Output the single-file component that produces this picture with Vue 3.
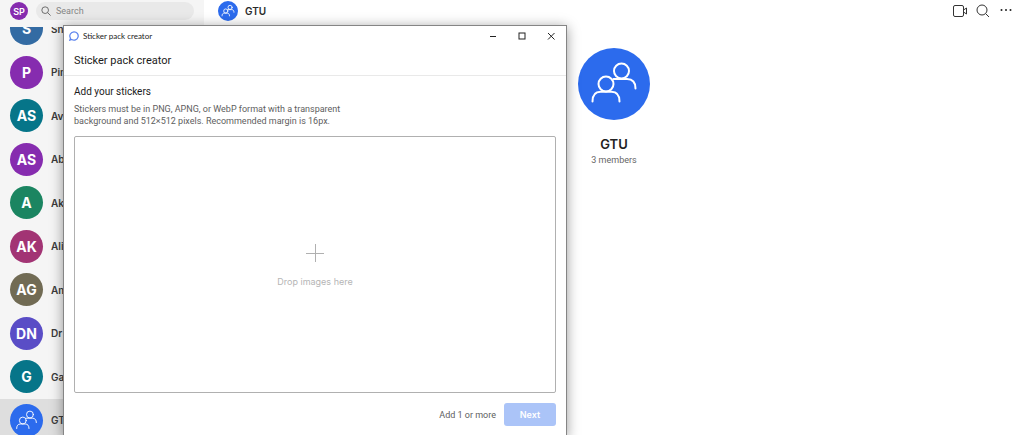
<script setup>
const chats = [
  { initials: 'S', name: 'Sn', tone: 'steel' },
  { initials: 'P', name: 'Pin', tone: 'violet' },
  { initials: 'AS', name: 'Av', tone: 'teal' },
  { initials: 'AS', name: 'Ab', tone: 'violet' },
  { initials: 'A', name: 'Ak', tone: 'green' },
  { initials: 'AK', name: 'Alis', tone: 'plum' },
  { initials: 'AG', name: 'Am', tone: 'taupe' },
  { initials: 'DN', name: 'Dr', tone: 'indigo' },
  { initials: 'G', name: 'Ga', tone: 'teal' },
  { initials: '', name: 'GTU', tone: 'blue', group: true, active: true },
]
</script>

<template>
  <div class="app">
    <svg class="defs" aria-hidden="true">
      <symbol id="group" viewBox="0 0 72 72">
        <g fill="none" stroke="#fff" stroke-linecap="round">
          <circle cx="43.500" cy="23" r="7.500" />
          <circle cx="28" cy="36" r="7.500" />
          <path d="M14.500 53.500C14.500 47 17.500 43.700 22.500 43.700H33.500C38.500 43.700 41.500 47 41.500 53.500" />
          <path d="M35.500 31H49C54.500 31 57.500 34.500 57.500 40.500" />
        </g>
      </symbol>
    </svg>

    <aside class="sidebar">
      <header class="side-head">
        <button class="me" type="button">SP</button>
        <label class="search">
          <svg viewBox="0 0 12 12" width="10" height="10" aria-hidden="true">
            <circle cx="5" cy="5" r="4" />
            <path d="M8 8l3.500 3.500" />
          </svg>
          <input type="text" placeholder="Search" aria-label="Search" />
        </label>
      </header>
      <nav class="chats" aria-label="Chats">
        <ul>
          <li v-for="(chat, i) in chats" :key="i" :class="{ active: chat.active }">
            <span class="avatar" :class="chat.tone">
              <svg v-if="chat.group" class="group" aria-hidden="true"><use href="#group" /></svg>
              <template v-else>{{ chat.initials }}</template>
            </span>
            <span class="name">{{ chat.name }}</span>
          </li>
        </ul>
      </nav>
    </aside>

    <main class="conversation">
      <header class="conv-head">
        <span class="badge blue"><svg class="group" aria-hidden="true"><use href="#group" /></svg></span>
        <span class="title">GTU</span>
        <div class="actions">
          <button type="button" aria-label="Video call">
            <svg viewBox="0 0 16 16" width="16" height="16">
              <rect x="1.500" y="2.500" width="10" height="11" rx="1.500" />
              <path d="M11.500 7L14.500 5V11L11.500 9" />
            </svg>
          </button>
          <button type="button" aria-label="Search in chat">
            <svg viewBox="0 0 16 16" width="16" height="16">
              <circle cx="7" cy="7" r="5" />
              <path d="M10.700 10.700L14 14" />
            </svg>
          </button>
          <button type="button" aria-label="More">
            <svg class="dots" viewBox="0 0 16 16" width="16" height="16">
              <circle cx="3.500" cy="7" r="1" />
              <circle cx="8" cy="7" r="1" />
              <circle cx="12.500" cy="7" r="1" />
            </svg>
          </button>
        </div>
      </header>
      <section class="hero">
        <span class="portrait blue"><svg class="group" aria-hidden="true"><use href="#group" /></svg></span>
        <h1>GTU</h1>
        <p>3 members</p>
      </section>
    </main>

    <div class="window" role="dialog" aria-labelledby="creator-title">
      <div class="titlebar">
        <svg class="logo" viewBox="0 0 12 12" width="10" height="10" aria-hidden="true">
          <path d="M6 1A5 5 0 1 1 3.300 10.200L1 11L1.800 8.700A5 5 0 0 1 6 1Z" />
        </svg>
        <span>Sticker pack creator</span>
        <div class="controls">
          <button type="button" aria-label="Minimize">
            <svg viewBox="0 0 8 8" width="8" height="8"><path d="M1 4.500H7" /></svg>
          </button>
          <button type="button" aria-label="Maximize">
            <svg viewBox="0 0 8 8" width="8" height="8"><rect x="1" y="1" width="6" height="6" /></svg>
          </button>
          <button type="button" aria-label="Close">
            <svg viewBox="0 0 8 8" width="8" height="8"><path d="M1 1L7.500 7.500M7.500 1L1 7.500" /></svg>
          </button>
        </div>
      </div>
      <h2 id="creator-title">Sticker pack creator</h2>
      <div class="body">
        <h3>Add your stickers</h3>
        <p class="hint">Stickers must be in PNG, APNG, or WebP format with a transparent background and 512×512 pixels. Recommended margin is 16px.</p>
        <button class="drop" type="button">
          <svg viewBox="0 0 20 20" width="20" height="20" aria-hidden="true"><path d="M10.500 1V19M1 10.500H19" /></svg>
          <span>Drop images here</span>
        </button>
      </div>
      <footer>
        <span>Add 1 or more</span>
        <button class="next" type="button" disabled>Next</button>
      </footer>
    </div>
  </div>
</template>

<style>
body {
  overflow: hidden;
}
</style>

<style scoped>
.app {
  position: relative;
  display: flex;
  height: 100vh;
  overflow: hidden;
  background: #fff;
  color: #2b2b2b;
  font-family: Inter, "Liberation Sans", sans-serif;
}
.app * {
  box-sizing: border-box;
}
.defs {
  position: absolute;
  width: 0;
  height: 0;
}
button {
  padding: 0;
  border: 0;
  background: none;
  color: inherit;
  font: inherit;
}
svg {
  flex: none;
}
h1, h2, h3, p, ul {
  margin: 0;
  padding: 0;
}

.sidebar {
  display: flex;
  flex: none;
  flex-direction: column;
  width: 204px;
  background: #f5f5f5;
}
.side-head {
  display: flex;
  flex: none;
  align-items: center;
  gap: 8px;
  height: 27px;
  padding: 0 10px 5px;
}
.me {
  flex: none;
  width: 18px;
  height: 18px;
  border-radius: 50%;
  background: #862caf;
  color: #fff;
  font-size: 9px;
  font-weight: 600;
}
.search {
  display: flex;
  flex: 1;
  align-items: center;
  gap: 5px;
  height: 18px;
  padding: 0 5px;
  border-radius: 9px;
  background: #e9e9e9;
}
.search svg {
  fill: none;
  stroke: #555;
}
.search input {
  width: 100%;
  min-width: 0;
  padding: 0;
  border: 0;
  outline: 0;
  background: none;
  font: 9px Roboto, "Liberation Sans", sans-serif;
}
.search input::placeholder {
  color: #858585;
  opacity: 1;
}
.chats {
  flex: 1;
  min-height: 0;
  overflow: hidden;
}
.chats ul {
  display: grid;
  grid-auto-rows: 1fr;
  height: 435px;
  margin-top: -20px;
  list-style: none;
}
.chats li {
  display: flex;
  align-items: center;
  gap: 8px;
  padding-left: 10px;
}
.chats li.active {
  background: #dedede;
}
.avatar, .badge, .portrait {
  display: flex;
  flex: none;
  align-items: center;
  justify-content: center;
  border-radius: 50%;
  color: #fff;
}
.avatar {
  width: 33px;
  height: 33px;
  font-size: 14px;
  font-weight: 700;
}
.name {
  color: #3b3b3b;
  font-size: 10px;
  font-weight: 600;
}
.group {
  width: 100%;
  height: 100%;
  stroke-width: 2px;
}
.badge .group {
  stroke-width: 3px;
}
.steel { background: #336ba3; }
.violet { background: #862caf; }
.teal { background: #067589; }
.green { background: #1b8561; }
.plum { background: #a23474; }
.taupe { background: #716b54; }
.indigo { background: #5a4dc6; }
.blue { background: #2c6bed; }

.conversation {
  flex: 1;
  min-width: 0;
}
.conv-head {
  display: flex;
  align-items: center;
  height: 22px;
  padding: 0 10px 0 14px;
}
.badge {
  width: 20px;
  height: 20px;
}
.title {
  margin-left: 7px;
  font-size: 10px;
  font-weight: 600;
}
.actions {
  display: flex;
  gap: 7px;
  margin-left: auto;
}
.actions svg {
  display: block;
  fill: none;
  stroke: #333;
}
.actions .dots {
  fill: #222;
  stroke: none;
}
.hero {
  display: flex;
  flex-direction: column;
  align-items: center;
  padding-top: 26px;
}
.portrait {
  width: 72px;
  height: 72px;
}
.hero h1 {
  margin-top: 15px;
  color: #222;
  font-size: 13px;
  font-weight: 600;
  line-height: 18px;
}
.hero p {
  color: #666;
  font-family: Roboto, "Liberation Sans", sans-serif;
  font-size: 9px;
  line-height: 14px;
}

.window {
  position: absolute;
  top: 25px;
  left: 63px;
  width: 504px;
  border: 1px solid #858585;
  background: #fff;
  box-shadow: 0 2px 12px rgba(0, 0, 0, 0.4);
  font-family: Roboto, "Liberation Sans", sans-serif;
}
.titlebar {
  display: flex;
  align-items: center;
  gap: 4px;
  height: 19px;
  padding: 0 1px 0 5px;
  color: #222;
  font: 8px Lato, sans-serif;
}
.logo {
  fill: none;
  stroke: #5b83ee;
  stroke-width: 1.500px;
}
.controls {
  display: flex;
  margin-left: auto;
}
.controls button {
  display: flex;
  align-items: center;
  justify-content: center;
  width: 29px;
  height: 19px;
}
.controls svg {
  fill: none;
  stroke: #222;
}
.window h2 {
  padding: 7px 10px 6px;
  border-bottom: 1px solid #e9e9e9;
  color: #1b1b1b;
  font-size: 11px;
  font-weight: 400;
  line-height: 17px;
}
.body {
  padding: 7px 10px 0;
}
.body h3 {
  color: #1b1b1b;
  font-size: 10px;
  font-weight: 400;
  line-height: 17px;
}
.hint {
  max-width: 280px;
  margin-top: 3px;
  color: #5e5e5e;
  font-size: 9px;
  line-height: 12px;
}
.drop {
  display: flex;
  flex-direction: column;
  align-items: center;
  justify-content: center;
  gap: 13px;
  width: 100%;
  height: 257px;
  margin-top: 9px;
  padding-top: 2px;
  border: 1px solid #b0b0b0;
  border-radius: 2px;
  color: #b5b5b5;
  font-family: Inter, "Liberation Sans", sans-serif;
  font-size: 9px;
  line-height: 12px;
}
.drop svg {
  fill: none;
  stroke: #b0b0b0;
}
footer {
  display: flex;
  align-items: center;
  justify-content: flex-end;
  gap: 8px;
  padding: 10px;
  color: #5e5e5e;
  font-size: 9px;
}
.next {
  width: 52px;
  height: 23px;
  border-radius: 3px;
  background: #abc4f8;
  color: #fff;
  font-family: Inter, "Liberation Sans", sans-serif;
  font-weight: 600;
}
</style>
